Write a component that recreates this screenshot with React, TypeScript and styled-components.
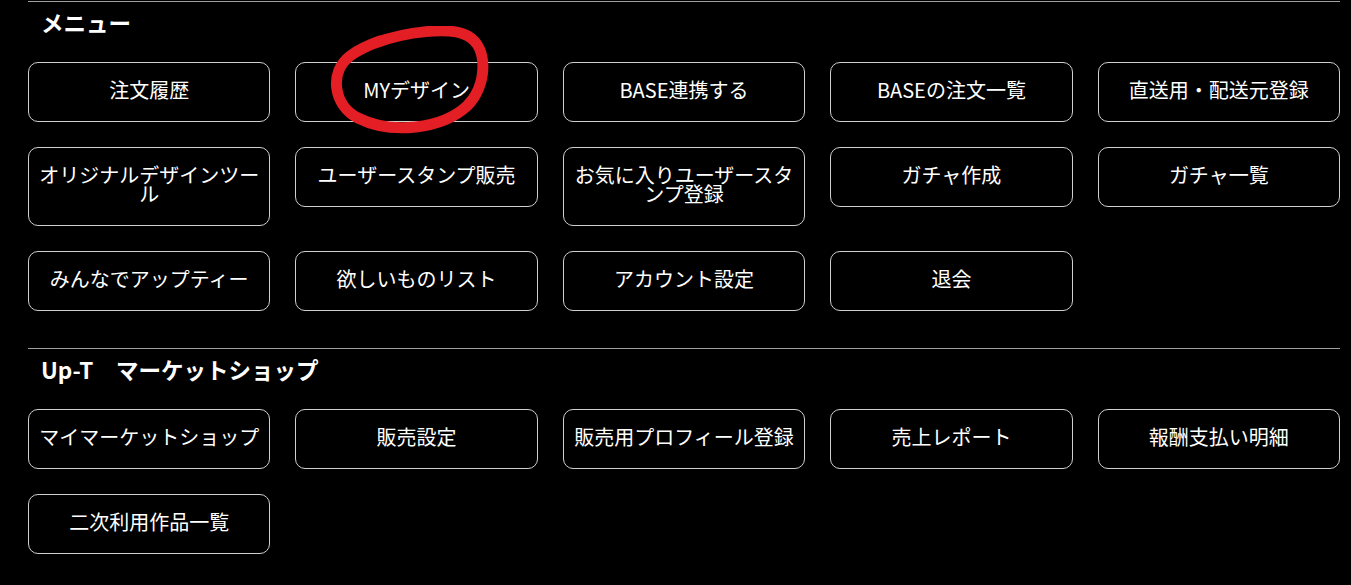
import styled, { createGlobalStyle } from "styled-components";

const GlobalStyle = createGlobalStyle`
  html, body {
    margin: 0;
    padding: 0;
    background: #000;
  }
  body {
    font-family: "Noto Sans CJK JP", "Noto Sans", sans-serif;
    color: #fff;
  }
`;

type Item = { label: string; marked?: boolean };

const menu: Item[] = [
  { label: "注文履歴" },
  { label: "MYデザイン", marked: true },
  { label: "BASE連携する" },
  { label: "BASEの注文一覧" },
  { label: "直送用・配送元登録" },
  { label: "オリジナルデザインツール" },
  { label: "ユーザースタンプ販売" },
  { label: "お気に入りユーザースタンプ登録" },
  { label: "ガチャ作成" },
  { label: "ガチャ一覧" },
  { label: "みんなでアップティー" },
  { label: "欲しいものリスト" },
  { label: "アカウント設定" },
  { label: "退会" },
];

const market: Item[] = [
  { label: "マイマーケットショップ" },
  { label: "販売設定" },
  { label: "販売用プロフィール登録" },
  { label: "売上レポート" },
  { label: "報酬支払い明細" },
  { label: "二次利用作品一覧" },
];

const MenuSection = ({ title, items }: { title: string; items: Item[] }) => {
  return (
    <Section>
      <Heading>{title}</Heading>
      <Grid>
        {items.map((item) => (
          <MenuButton key={item.label} href="#">
            {item.label}
            {item.marked && (
              <Mark viewBox="0 0 180 120" aria-hidden="true">
                <path
                  d="M 55 17 C 85 6, 130 0, 148 10 C 169 22, 167 60, 147 80 C 122 103, 72 109, 38 92 C 13 79, 9 46, 30 30 C 38 24, 46 20, 60 15"
                  fill="none"
                  stroke="#e31e24"
                  strokeWidth="11"
                  strokeLinecap="round"
                  strokeLinejoin="round"
                />
              </Mark>
            )}
          </MenuButton>
        ))}
      </Grid>
    </Section>
  );
};

const App = () => {
  return (
    <>
      <GlobalStyle />
      <Page>
        <MenuSection title="メニュー" items={menu} />
        <MenuSection title="Up-T　マーケットショップ" items={market} />
      </Page>
    </>
  );
};

const Page = styled.div`
  padding: 1px 11px 0 28px;
`;

const Section = styled.section`
  border-top: 1px solid #a0a0a0;
  margin-bottom: 37px;
`;

const Heading = styled.h2`
  margin: 0 0 20px;
  padding-left: 13px;
  font-size: 22.5px;
  line-height: 40px;
  font-weight: 700;
  color: #fff;
`;

const Grid = styled.div`
  display: grid;
  grid-template-columns: repeat(5, 1fr);
  gap: 25px;
  align-items: start;
`;

const MenuButton = styled.a`
  position: relative;
  display: block;
  padding: 17px 8px 22px;
  border: 1px solid #cfcfcf;
  border-radius: 10px;
  color: #fff;
  text-decoration: none;
  text-align: center;
  font-size: 20px;
  line-height: 19px;
`;

const Mark = styled.svg`
  position: absolute;
  left: 24px;
  top: -37px;
  width: 180px;
  height: 120px;
  pointer-events: none;
`;

export default App;
